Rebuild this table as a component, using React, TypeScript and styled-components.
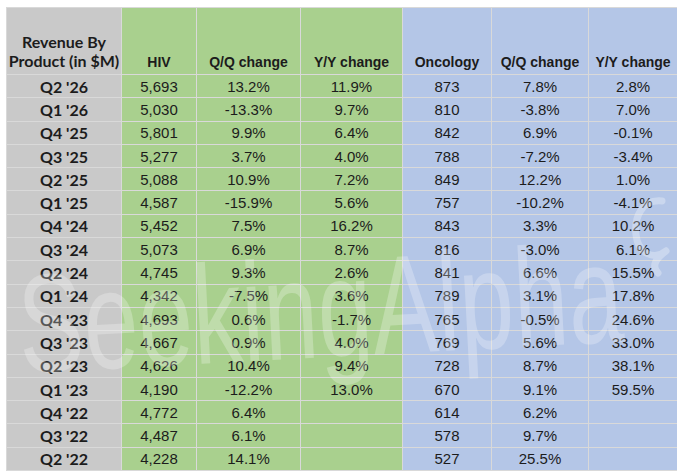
import * as React from "react";
import styled, { createGlobalStyle } from "styled-components";

type Row = {
  period: string;
  hiv: string;
  hivQq: string;
  hivYy: string;
  onc: string;
  oncQq: string;
  oncYy: string;
};

const rows: Row[] = [
  { period: "Q2 '26", hiv: "5,693", hivQq: "13.2%", hivYy: "11.9%", onc: "873", oncQq: "7.8%", oncYy: "2.8%" },
  { period: "Q1 '26", hiv: "5,030", hivQq: "-13.3%", hivYy: "9.7%", onc: "810", oncQq: "-3.8%", oncYy: "7.0%" },
  { period: "Q4 '25", hiv: "5,801", hivQq: "9.9%", hivYy: "6.4%", onc: "842", oncQq: "6.9%", oncYy: "-0.1%" },
  { period: "Q3 '25", hiv: "5,277", hivQq: "3.7%", hivYy: "4.0%", onc: "788", oncQq: "-7.2%", oncYy: "-3.4%" },
  { period: "Q2 '25", hiv: "5,088", hivQq: "10.9%", hivYy: "7.2%", onc: "849", oncQq: "12.2%", oncYy: "1.0%" },
  { period: "Q1 '25", hiv: "4,587", hivQq: "-15.9%", hivYy: "5.6%", onc: "757", oncQq: "-10.2%", oncYy: "-4.1%" },
  { period: "Q4 '24", hiv: "5,452", hivQq: "7.5%", hivYy: "16.2%", onc: "843", oncQq: "3.3%", oncYy: "10.2%" },
  { period: "Q3 '24", hiv: "5,073", hivQq: "6.9%", hivYy: "8.7%", onc: "816", oncQq: "-3.0%", oncYy: "6.1%" },
  { period: "Q2 '24", hiv: "4,745", hivQq: "9.3%", hivYy: "2.6%", onc: "841", oncQq: "6.6%", oncYy: "15.5%" },
  { period: "Q1 '24", hiv: "4,342", hivQq: "-7.5%", hivYy: "3.6%", onc: "789", oncQq: "3.1%", oncYy: "17.8%" },
  { period: "Q4 '23", hiv: "4,693", hivQq: "0.6%", hivYy: "-1.7%", onc: "765", oncQq: "-0.5%", oncYy: "24.6%" },
  { period: "Q3 '23", hiv: "4,667", hivQq: "0.9%", hivYy: "4.0%", onc: "769", oncQq: "5.6%", oncYy: "33.0%" },
  { period: "Q2 '23", hiv: "4,626", hivQq: "10.4%", hivYy: "9.4%", onc: "728", oncQq: "8.7%", oncYy: "38.1%" },
  { period: "Q1 '23", hiv: "4,190", hivQq: "-12.2%", hivYy: "13.0%", onc: "670", oncQq: "9.1%", oncYy: "59.5%" },
  { period: "Q4 '22", hiv: "4,772", hivQq: "6.4%", hivYy: "", onc: "614", oncQq: "6.2%", oncYy: "" },
  { period: "Q3 '22", hiv: "4,487", hivQq: "6.1%", hivYy: "", onc: "578", oncQq: "9.7%", oncYy: "" },
  { period: "Q2 '22", hiv: "4,228", hivQq: "14.1%", hivYy: "", onc: "527", oncQq: "25.5%", oncYy: "" },
];

const colWidths = [115, 75, 104, 102, 89, 97, 89];

type Tone = "gray" | "green" | "blue";

const tones: Record<Tone, string> = {
  gray: "#c9c9c9",
  green: "#a9d08e",
  blue: "#b4c6e7",
};

const GlobalStyle = createGlobalStyle`
  html, body {
    margin: 0;
    padding: 0;
    background: #ffffff;
  }
`;

const Page = styled.div`
  padding: 7px 6px 0 6px;
`;

const Frame = styled.div`
  position: relative;
  width: 671px;
  overflow: hidden;
`;

const Sheet = styled.table`
  border-collapse: collapse;
  table-layout: fixed;
  width: 671px;
  color: #1c1c1c;
`;

const labelFont = "Lato, 'Open Sans', sans-serif";
const dataFont = "'Liberation Sans', Arial, sans-serif";

const HeadCell = styled.th<{ $tone: Tone; $label?: boolean }>`
  height: 62px;
  padding: 0 0 4px 0;
  vertical-align: bottom;
  text-align: center;
  background: ${(p) => tones[p.$tone]};
  border: 1px solid #d9d9d9;
  font-family: ${(p) => (p.$label ? labelFont : dataFont)};
  font-size: ${(p) => (p.$label ? "16px" : "14px")};
  line-height: ${(p) => (p.$label ? "19px" : "16px")};
  font-weight: 700;
  white-space: nowrap;
`;

const Cell = styled.td<{ $tone: Tone; $label?: boolean }>`
  height: 22.3px;
  padding: 0;
  text-align: center;
  vertical-align: middle;
  background: ${(p) => tones[p.$tone]};
  border: 1px solid #d9d9d9;
  font-family: ${(p) => (p.$label ? labelFont : dataFont)};
  font-size: ${(p) => (p.$label ? "16px" : "15px")};
  font-weight: ${(p) => (p.$label ? 700 : 400)};
  line-height: 17px;
  white-space: nowrap;
`;

const Watermark = styled.div`
  position: absolute;
  left: 16px;
  top: 248px;
  pointer-events: none;
  transform: rotate(-3deg) scaleX(0.7);
  transform-origin: left bottom;
  font-family: "Liberation Sans", Arial, sans-serif;
  font-size: 140px;
  line-height: 1;
  color: rgba(255, 255, 255, 0.26);
  white-space: nowrap;
`;

const AlphaMark = styled.svg`
  position: absolute;
  left: 620px;
  top: 186px;
  pointer-events: none;
`;

export default function App() {
  return (
    <>
      <GlobalStyle />
      <Page>
        <Frame>
          <Sheet>
            <colgroup>
              {colWidths.map((w, i) => (
                <col key={i} style={{ width: w }} />
              ))}
            </colgroup>
            <thead>
              <tr>
                <HeadCell $tone="gray" $label>
                  Revenue By
                  <br />
                  Product (in $M)
                </HeadCell>
                <HeadCell $tone="green">HIV</HeadCell>
                <HeadCell $tone="green">Q/Q change</HeadCell>
                <HeadCell $tone="green">Y/Y change</HeadCell>
                <HeadCell $tone="blue">Oncology</HeadCell>
                <HeadCell $tone="blue">Q/Q change</HeadCell>
                <HeadCell $tone="blue">Y/Y change</HeadCell>
              </tr>
            </thead>
            <tbody>
              {rows.map((r) => (
                <tr key={r.period}>
                  <Cell $tone="gray" $label>{r.period}</Cell>
                  <Cell $tone="green">{r.hiv}</Cell>
                  <Cell $tone="green">{r.hivQq}</Cell>
                  <Cell $tone="green">{r.hivYy}</Cell>
                  <Cell $tone="blue">{r.onc}</Cell>
                  <Cell $tone="blue">{r.oncQq}</Cell>
                  <Cell $tone="blue">{r.oncYy}</Cell>
                </tr>
              ))}
            </tbody>
          </Sheet>
          <Watermark>SeekingAlpha</Watermark>
          <AlphaMark width="50" height="86" viewBox="0 0 50 86">
            <path
              d="M36 8 C16 6 8 24 10 42 C12 60 28 68 40 58 M40 58 C32 64 24 72 32 80"
              fill="none"
              stroke="rgba(255,255,255,0.3)"
              strokeWidth="7"
              strokeLinecap="round"
            />
          </AlphaMark>
        </Frame>
      </Page>
    </>
  );
}
